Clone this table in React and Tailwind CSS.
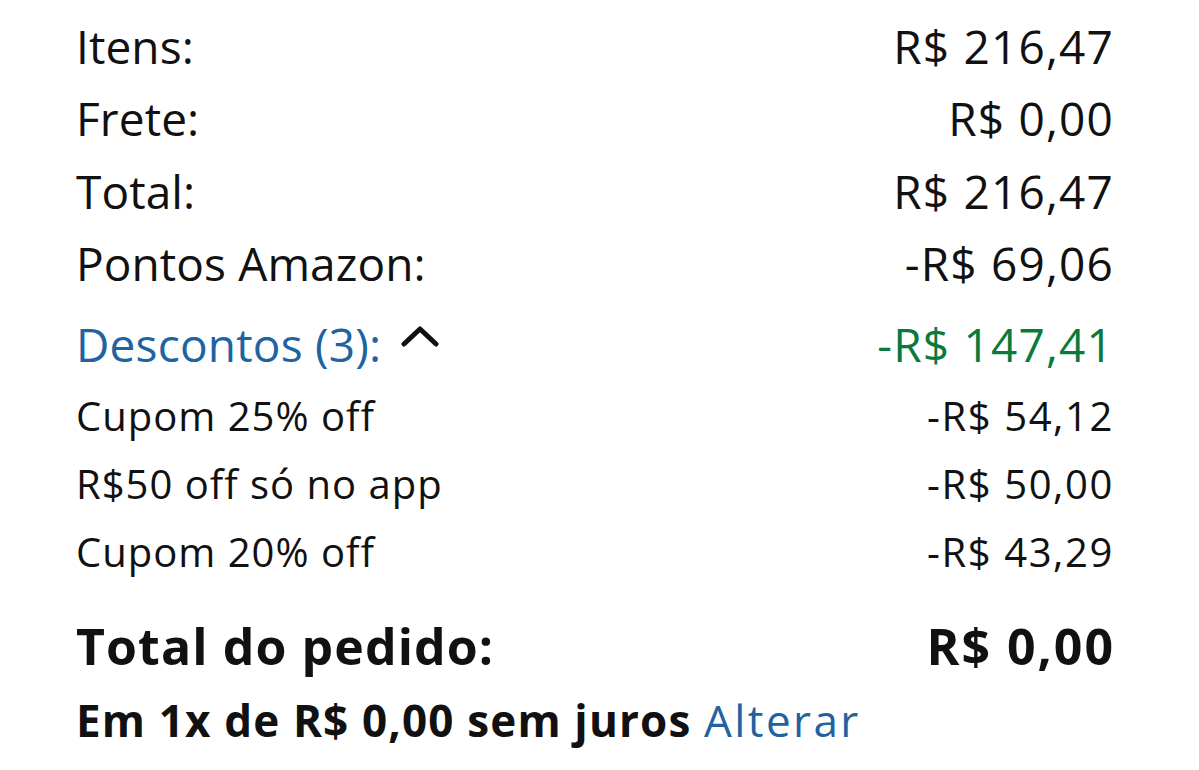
import React from 'react';

const rows = [
  { label: 'Itens:', value: 'R$ 216,47' },
  { label: 'Frete:', value: 'R$ 0,00' },
  { label: 'Total:', value: 'R$ 216,47' },
  { label: 'Pontos Amazon:', value: '-R$ 69,06' },
];

const discounts = [
  { label: 'Cupom 25% off', value: '-R$ 54,12' },
  { label: 'R$50 off só no app', value: '-R$ 50,00' },
  { label: 'Cupom 20% off', value: '-R$ 43,29' },
];

function ChevronUp() {
  return (
    <svg width="38" height="22" viewBox="0 0 38 22" className="ml-[20px] mb-[17px]">
      <path d="M3 19 L19 4 L35 19" fill="none" stroke="#111" strokeWidth="5" strokeLinecap="round" strokeLinejoin="round" />
    </svg>
  );
}

export default function App() {
  return (
    <div className="w-[1199px] h-[770px] bg-white text-[#111] pl-[76px] pr-[86px] pt-[10px]" style={{ fontFamily: '"Open Sans", "Noto Sans", sans-serif' }}>
      {/* resumo do pedido */}
      {rows.map((r) => (
        <div key={r.label} className="flex justify-between items-center h-[72.5px] text-[46px]">
          <span className="tracking-[0.1px]">{r.label}</span>
          <span className="tracking-[1.2px] -mr-[1px]">{r.value}</span>
        </div>
      ))}

      <div className="flex justify-between items-center h-[82px] pt-[6px] text-[46px]">
        <span className="flex items-center text-[#2162a1] tracking-[0.2px]">
          Descontos (3):
          <ChevronUp />
        </span>
        <span className="text-[#0a7a3c] tracking-[1.2px] -mr-[1px]">-R$ 147,41</span>
      </div>

      {discounts.map((d) => (
        <div key={d.label} className="flex justify-between items-center h-[68px] text-[40px]">
          <span className="tracking-[1px]">{d.label}</span>
          <span className="tracking-[1.6px] -mr-[1px]">{d.value}</span>
        </div>
      ))}

      <div className="flex justify-between items-center h-[74px] mt-[23px] text-[50px] font-bold">
        <span className="tracking-[1.1px]">Total do pedido:</span>
        <span className="tracking-[2px] -mr-[2px]">R$ 0,00</span>
      </div>
      <div className="flex items-center h-[74px] text-[44px] font-bold">
        <span className="tracking-[1.15px]">Em 1x de R$ 0,00 sem juros&nbsp;</span>
        <span className="font-normal text-[#2162a1] tracking-[2.4px]">Alterar</span>
      </div>
    </div>
  );
}
